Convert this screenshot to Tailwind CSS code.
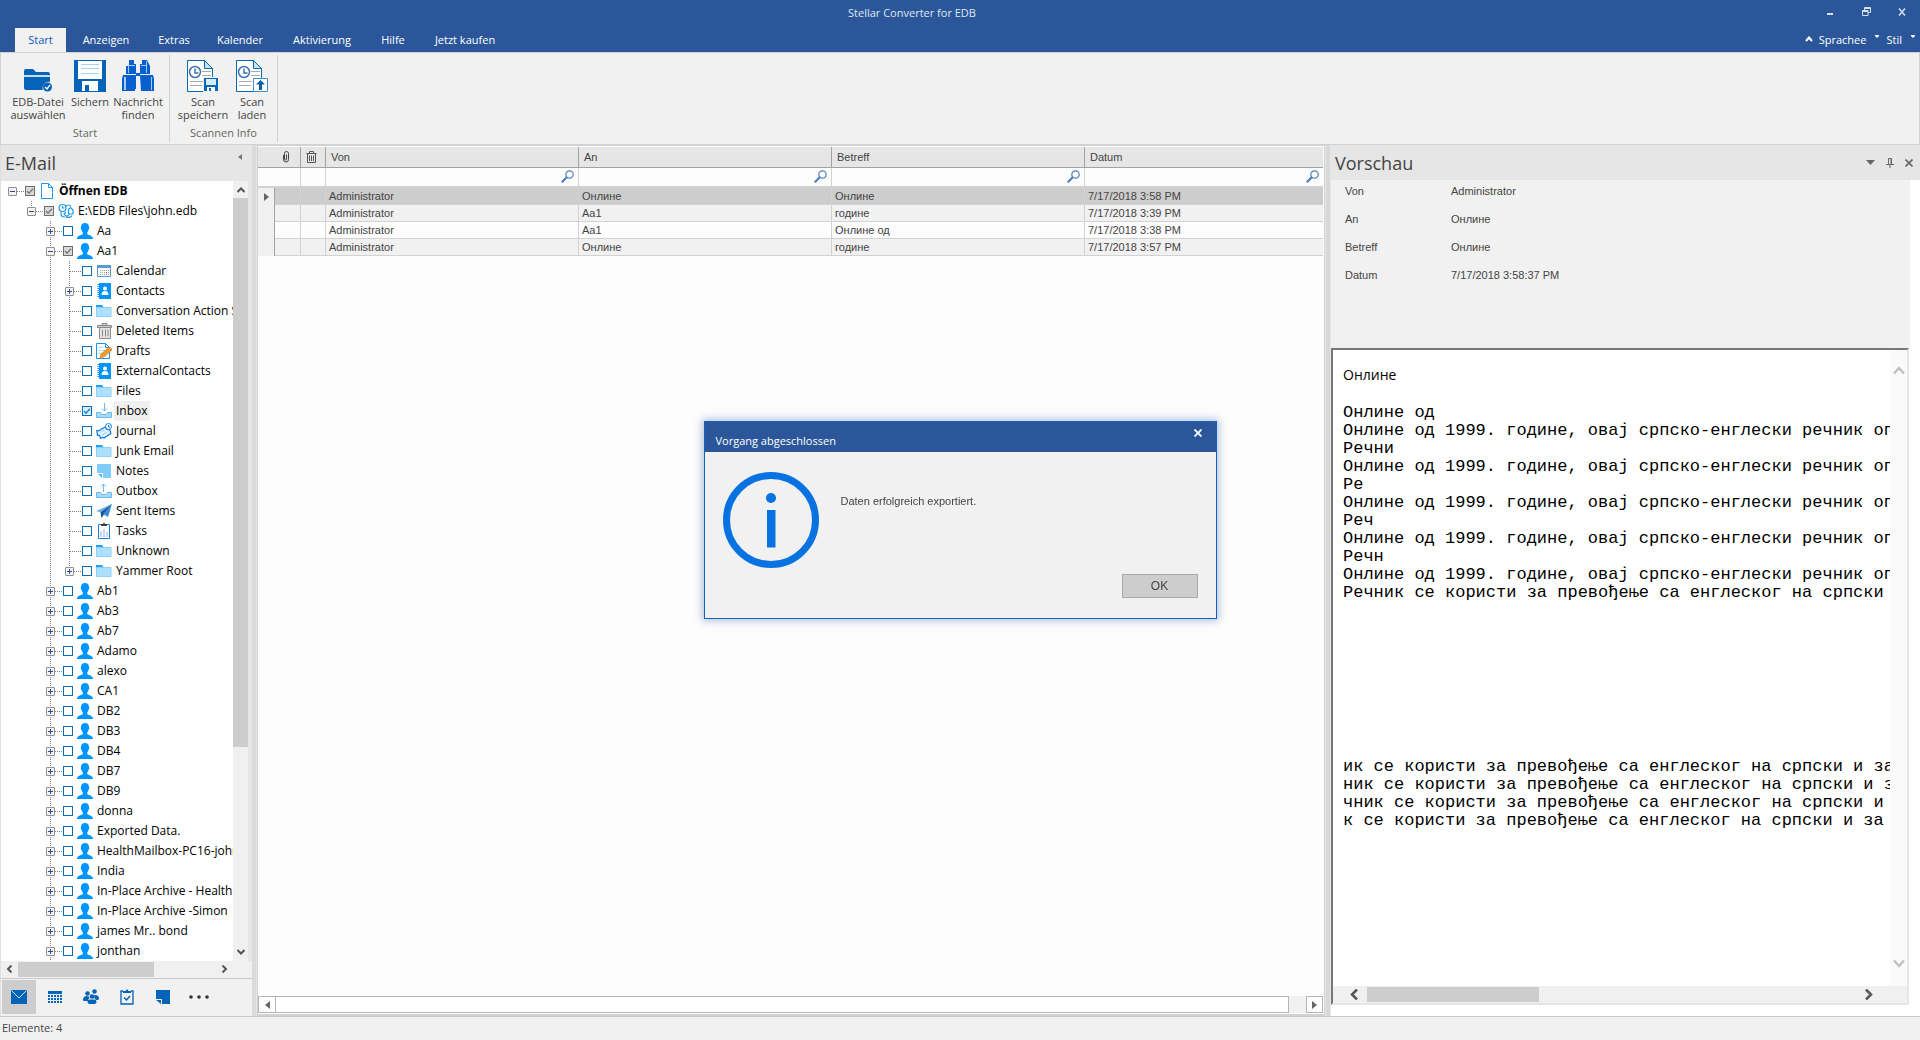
<!DOCTYPE html>
<html lang="de">
<head>
    <meta charset="UTF-8">
    <title>Stellar Converter for EDB</title>
    <meta name="viewport" content="width=device-width, initial-scale=1.0">
    <script src="https://cdn.jsdelivr.net/npm/@tailwindcss/browser@4"></script>
</head>
<body class="h-screen flex flex-col overflow-hidden bg-[#f1f1f1] font-['Open_Sans',sans-serif] text-[11px] leading-[13px] text-[#444]">

    <!-- icon sprite -->
    <svg class="hidden">
        <symbol id="i-user" viewBox="0 0 16 16"><path fill="#0094ff" d="M8 0c2.400 0 4 1.500 4 3.800 0 .6.300.8.300 1.400 0 .7-.5.900-.7 1.500C11.300 8 10.600 9 10.200 9.500v1.700c1.800 1 5.800 1.200 5.800 4.800H0c0-3.600 4-3.800 5.800-4.800V9.500C5.400 9 4.700 8 4.400 6.700c-.2-.6-.7-.8-.7-1.500 0-.6.3-.8.3-1.400C4 1.500 5.600 0 8 0z"/></symbol>
        <symbol id="i-file" viewBox="0 0 16 16"><path fill="#fff" stroke="#1c97ea" d="M2.500.5h7l4 4v11h-11z"/><path fill="none" stroke="#1c97ea" d="M9.500.5v4h4"/></symbol>
        <symbol id="i-db" viewBox="0 0 16 16"><g fill="none" stroke="#1c97ea" stroke-width="1.200"><circle cx="4.500" cy="5" r="3.500"/><path d="M4.500 3v2h2M8 3.500C9 1.500 12 1.500 13 3.500M10 7l2.500-2.500L15 7v4h-4.500M10.500 11V7M3 9v2c0 2 2 3 4 3M8 9l-2 2 2 2h2l1-2M14 12.500c-1 2-4 2.500-6 1.500"/></g></symbol>
        <symbol id="i-calendar" viewBox="0 0 16 16"><path fill="#fff" stroke="#5b9bd5" d="M1.500 2.500h13v11h-13z"/><path fill="#5b9bd5" d="M1 2h14v3H1z"/><path stroke="#9aa" stroke-dasharray="1 1" d="M4 7.500h9M4 9.500h9M4 11.500h9"/><path fill="#e33" d="M10 9h1v1h-1z"/></symbol>
        <symbol id="i-contacts" viewBox="0 0 16 16"><path fill="#0094ff" d="M3 0h12v16H3z"/><path stroke="#0094ff" stroke-width="2" stroke-dasharray="1 1" d="M2.500 1v14"/><circle cx="9" cy="5.500" r="2" fill="#fff"/><path fill="#fff" d="M5.500 12c0-2.500 1-4 3.500-4s3.500 1.500 3.500 4z"/></symbol>
        <symbol id="i-folder" viewBox="0 0 16 16"><path fill="#1ba1f5" d="M0 2h6l1.500 2H15v2H0z"/><path fill="#addfff" stroke="#8fd0fb" d="M.5 4.500h14.500v9H.5z"/></symbol>
        <symbol id="i-bin" viewBox="0 0 16 16"><g fill="none" stroke="#8a8a8a"><path fill="#e6e6e6" d="M3.500 4.500h11v11h-11z"/><path fill="#ccc" d="M1.500 2.500h14v2h-14zM6 2V.5h5V2"/><path d="M6.500 6.500v7M9.500 6.500v7M12 6.500v7"/></g></symbol>
        <symbol id="i-drafts" viewBox="0 0 16 16"><path fill="#fff" stroke="#1c97ea" d="M.5.5h9l4 4v11H.5z"/><path fill="none" stroke="#1c97ea" d="M9.500.5v4h4"/><path stroke="#addfff" d="M2.500 4.500h5M2.500 7.500h8M2.500 10.500h4"/><path fill="#f29a2e" stroke="#d97b12" stroke-width=".6" d="M4 15l1-4 8-7 3 3-8 7z"/><path fill="#e8a0a0" d="M13 4l1-.8 2.500 2.500L16 7z"/></symbol>
        <symbol id="i-inbox" viewBox="0 0 16 16"><path fill="#a6d9fa" stroke="#6bb9ee" d="M.5 9.500h4l1.500 2h4l1.500-2h4v5H.5z"/><path fill="none" stroke="#6bb9ee" d="M8.500 0v8M6 5.500l2.500 2.500L11 5.500"/></symbol>
        <symbol id="i-outbox" viewBox="0 0 16 16"><path fill="#a6d9fa" stroke="#6bb9ee" d="M.5 9.500h4l1.500 2h4l1.500-2h4v5H.5z"/><path fill="none" stroke="#6bb9ee" d="M7.500 9V1M5 3.500L7.500 1l2.500 2.500"/></symbol>
        <symbol id="i-journal" viewBox="0 0 16 16"><path fill="#e6f4ff" stroke="#0f7ae0" stroke-width="1.200" d="M.8 7.500l2 .3L9 4l2 2.500 3 .5.8 3.500L8 15l-1.500-.5-2 .8-1-3-2 0z"/><path stroke="#8fd0fb" d="M4.500 9.500l4-2.500M6 12l5-3"/><circle cx="12.500" cy="3.500" r="3" fill="#fff" stroke="#0f7ae0"/><path fill="none" stroke="#0f7ae0" d="M12.500 2v2H14"/></symbol>
        <symbol id="i-notes" viewBox="0 0 16 16"><path fill="#7fcdfd" d="M1 1h14v14H7V10H1z"/><path fill="#5ab6f0" d="M2 11h4v4z"/></symbol>
        <symbol id="i-sent" viewBox="0 0 16 16"><path fill="#6aaee6" d="M0 8l16-7-9 9z"/><path fill="#14539a" d="M16 1L4.500 9.500 5.500 15 8 11.500z"/><path fill="#3d8bd4" d="M16 1l-4 13-5-3z"/></symbol>
        <symbol id="i-tasks" viewBox="0 0 16 16"><path fill="#fff" stroke="#1482e0" d="M2.500 1.500h11v14h-11z"/><path fill="#444" d="M5 3V1h2V0h2v1h2v2z"/><path fill="#c5d5f3" d="M4 8h2v6H4zM7 6h2v8H7zM10 9h2v5h-2z"/></symbol>
        <symbol id="i-search" viewBox="0 0 13 13"><circle cx="8.500" cy="4.500" r="3.700" fill="#fff" stroke="#4a7ebb" stroke-width="1.200"/><path stroke="#4a7ebb" stroke-width="2.200" d="M5.700 7.300L.8 12.200"/></symbol>
    </svg>

    <header class="bg-[#2b579a] text-white">
        <div class="flex h-7 items-start">
            <h1 class="flex-1 pt-[6px] text-center text-[#dfe7f2]">Stellar Converter for EDB</h1>
            <div class="flex w-24 gap-6 pt-[6px]">
                <button aria-label="Minimieren"><svg class="size-3" viewBox="0 0 12 12"><path fill="#d5dfee" d="M3 7h6v2H3z"/></svg></button>
                <button aria-label="Wiederherstellen"><svg class="size-3" viewBox="0 0 12 12" fill="none" stroke="#d5dfee"><path d="M4.500 4V1.500h6v5H8M4.500 2.500h6M2.500 4.500H8v5H2.500zM2.500 5.500H8"/></svg></button>
                <button aria-label="Schließen"><svg class="size-3" viewBox="0 0 12 12" stroke="#d5dfee" stroke-width="1.500"><path d="M3 2.500l6 7M9 2.500l-6 7"/></svg></button>
            </div>
        </div>
        <nav class="flex h-6 items-stretch pl-[15px] *:pb-[2px]">
            <button class="w-[51px] bg-[#f1f1f1] text-[#0a5bc4]">Start</button>
            <button class="w-20">Anzeigen</button>
            <button class="w-14">Extras</button>
            <button class="w-[76px]">Kalender</button>
            <button class="w-[88px]">Aktivierung</button>
            <button class="w-[54px]">Hilfe</button>
            <button class="w-[90px]">Jetzt kaufen</button>
            <div class="ml-auto flex items-center pr-1">
                <button class="mr-[6px]" aria-label="Menüband ausblenden"><svg class="w-2 h-[6px]" viewBox="0 0 8 6"><path fill="none" stroke="#fff" stroke-width="2" d="M1 5l3-3.500L7 5"/></svg></button>
                <button class="flex items-center gap-2">Sprachee <svg class="mb-1 w-[6px] h-1" viewBox="0 0 6 4"><path fill="#fff" d="M1 0h4v1L3 3 1 1z"/></svg></button>
                <button class="ml-[6px] flex items-center gap-2">Stil <svg class="mb-1 w-[6px] h-1" viewBox="0 0 6 4"><path fill="#fff" d="M1 0h4v1L3 3 1 1z"/></svg></button>
            </div>
        </nav>
    </header>

    <!-- ribbon -->
    <section class="flex h-[93px] shrink-0 border border-[#d2d2d2] bg-[#f1f1f1] py-[2px]">
        <div class="flex w-[169px] flex-col justify-between border-r border-[#d2d2d2] pt-[5px] pb-[3px]">
            <div class="flex gap-[3px] pl-[8px]">
                <button class="flex w-[58px] flex-col items-center gap-[3px]">
                    <svg class="size-8" viewBox="0 0 32 32"><path fill="#0563b8" d="M2 11q0-2 2-2h7l3 3h12q2 0 2 2v1H2z"/><path fill="#0563b8" d="M2 17h26v5a6 6 0 0 0-7 8H4q-2 0-2-2z"/><path fill="#9cc4e6" d="M2 15.500h26v1H2z"/><circle cx="25.500" cy="27" r="4.500" fill="#0563b8"/><path fill="none" stroke="#fff" stroke-width="1.300" d="M23 27l2 2 3-4"/></svg>
                    <span>EDB-Datei<br>auswählen</span>
                </button>
                <button class="flex w-10 flex-col items-center gap-[3px]">
                    <svg class="size-8" viewBox="0 0 32 32"><path fill="#0563b8" d="M0 0h32v32H0z"/><path fill="#fff" d="M4 1h24v18H4zM8 21h16v10H8z"/><path stroke="#a8d4f0" d="M7 4.500h18M7 8.500h18M7 13.500h18"/><path fill="#0563b8" d="M11 25h4v6h-4z"/></svg>
                    <span>Sichern</span>
                </button>
                <button class="flex w-[50px] flex-col items-center gap-[3px]">
                    <svg class="size-8" viewBox="0 0 32 32"><g fill="#0a5fd0"><path d="M7 0h5v4h2v10H4V6h3zM20 0h5l3 6v8H18V4h2zM14 13h4v3h-4z"/><path d="M1 15h13v14H0V19zM18 15h13l1 4v12H19z"/><path d="M0 19h13v12H0z"/></g><path fill="#a5cbf2" d="M6 5h1v8H6zM24 1h1v12h-1zM2 17h2v13H2zM29 17h1v13h-1zM7 5h6v1H7zM19 5h6v1h-6z"/><path fill="#f1f1f1" d="M14 17h4v15h-4zM13 31h6v1h-6zM15 0h2v12h-2z"/></svg>
                    <span>Nachricht<br>finden</span>
                </button>
            </div>
            <span class="text-center text-[#666]">Start</span>
        </div>
        <div class="flex w-[108px] flex-col justify-between border-r border-[#d2d2d2] pt-[5px] pb-[3px]">
            <div class="flex pl-[8px]">
                <button class="flex w-[50px] flex-col items-center gap-[3px]">
                    <svg class="size-8" viewBox="0 0 32 32"><path fill="#fff" stroke="#0a67b5" d="M.5.500h17l8 8v23H.5z"/><path fill="#c4e4fa" stroke="#0a67b5" d="M17.500.5v8h8z"/><circle cx="8" cy="12" r="5.500" fill="#fff" stroke="#3f72af" stroke-width="1.500"/><path fill="none" stroke="#3f72af" stroke-width="1.500" d="M8 8.500V13h3.500"/><path stroke="#a9a9a9" d="M15 11.500h9M15 15.500h9M3 21.500h13M3 25.500h12"/><path fill="#0a67b5" stroke="#f1f1f1" d="M16.500 17.500h15v14h-15z"/><path fill="#d5ecfb" d="M19 19h10v6H19z"/><path fill="#fff" d="M20 27h8v4h-8z"/><path fill="#0a67b5" d="M22 28h2v3h-2z"/></svg>
                    <span>Scan<br>speichern</span>
                </button>
                <button class="flex w-12 flex-col items-center gap-[3px]">
                    <svg class="size-8" viewBox="0 0 32 32"><path fill="#fff" stroke="#0a67b5" d="M.5.500h17l8 8v23H.5z"/><path fill="#c4e4fa" stroke="#0a67b5" d="M17.500.5v8h8z"/><circle cx="8" cy="12" r="5.500" fill="#fff" stroke="#3f72af" stroke-width="1.500"/><path fill="none" stroke="#3f72af" stroke-width="1.500" d="M8 8.500V13h3.500"/><path stroke="#a9a9a9" d="M15 11.500h9M15 15.500h9M3 21.500h13M3 25.500h12"/><path fill="#fff" stroke="#3f8fd0" d="M17.500 18.500h14v13h-14z"/><path fill="#0a5fa8" d="M24.500 20l4.500 4.500h-3V30h-3v-5.500h-3z"/></svg>
                    <span>Scan<br>laden</span>
                </button>
            </div>
            <span class="text-center text-[#666]">Scannen Info</span>
        </div>
    </section>

    <main class="flex min-h-0 flex-1">

        <!-- folder pane -->
        <aside class="flex w-[252px] shrink-0 flex-col border-l border-[#e0e0e0] bg-[#e6e6e6]">
            <div class="flex h-9 shrink-0 items-center pl-1">
                <h2 class="flex-1 text-[18px] leading-6">E-Mail</h2>
                <button class="mr-[10px] mb-3" aria-label="Einklappen"><svg class="h-[6px] w-1" viewBox="0 0 4 6"><path fill="#777" d="M4 0v6L0 3z"/></svg></button>
            </div>
            <div class="flex min-h-0 flex-1 bg-[#e6e6e6]">
                <ul id="tree" class="min-w-0 flex-1 overflow-hidden bg-white text-[12px] leading-5 text-black"></ul>
                <div class="mr-1 flex w-[15px] shrink-0 flex-col items-center bg-[#f0f0f0]">
                    <svg class="h-[17px] w-2 shrink-0" viewBox="0 0 8 17"><path fill="none" stroke="#555" stroke-width="2" d="M.5 11L4 7.500 7.500 11"/></svg>
                    <div class="w-full grow-[549] bg-[#cdcdcd]"></div>
                    <div class="grow-[197]"></div>
                    <svg class="h-[17px] w-2 shrink-0" viewBox="0 0 8 17"><path fill="none" stroke="#555" stroke-width="2" d="M.5 6L4 9.500 7.500 6"/></svg>
                </div>
            </div>
            <div class="flex h-[17px] shrink-0 items-center bg-[#f0f0f0] pb-px">
                <svg class="mx-[5px] h-2 w-[7px]" viewBox="0 0 7 8"><path fill="none" stroke="#555" stroke-width="2" d="M5.500.5L2 4l3.500 3.500"/></svg>
                <div class="h-[15px] w-[136px] bg-[#cdcdcd]"></div>
                <svg class="ml-auto mr-6 h-2 w-[7px]" viewBox="0 0 7 8"><path fill="none" stroke="#555" stroke-width="2" d="M1.500.5L5 4 1.500 7.500"/></svg>
            </div>
            <nav class="flex h-[38px] shrink-0 items-start border-t border-[#c8c8c8] bg-[#f1f1f1] px-px pt-px">
                <button class="flex h-[34px] w-[34px] items-center justify-center bg-[#cdcdcd]" aria-label="E-Mail"><svg class="size-4" viewBox="0 0 16 16"><path fill="#0563b8" d="M0 1h16v14H0z"/><path fill="none" stroke="#cfe0f2" d="M.5 1.500L8 9l7.500-7.500"/></svg></button>
                <button class="flex h-[34px] w-[38px] items-center justify-center" aria-label="Kalender"><svg class="size-4" viewBox="0 0 16 16"><path fill="#0563b8" d="M1 2h14v3H1z"/><path stroke="#0563b8" stroke-width="2" stroke-dasharray="2 1" d="M1 7h14M1 10h14M1 13h14"/></svg></button>
                <button class="flex h-[34px] w-[34px] items-center justify-center" aria-label="Kontakte"><svg class="size-4" viewBox="0 0 16 16"><g fill="#0563b8"><circle cx="11.500" cy="2.500" r="2.300"/><circle cx="4.500" cy="4.500" r="2.300"/><circle cx="9" cy="7.500" r="2.300"/><path d="M0 11q0-4 4-4 2 0 2.500 2Q5 10 5 12H1q-1 0-1-1zM12 6q4 0 4 3.500 0 1.500-3 1.500-1-1.500-2-2 1-1.500 0-3z"/><rect x="4.500" y="10.500" width="9" height="4.500" rx="2.200"/></g></svg></button>
                <button class="flex h-[34px] w-[37px] items-center justify-center" aria-label="Aufgaben"><svg class="size-4" viewBox="0 0 16 16"><path fill="none" stroke="#0563b8" stroke-width="1.300" d="M4 2H2v13h12V2h-2"/><path fill="#0563b8" d="M4 4V2h2.500L8 0l1.500 2H12v2z"/><path fill="none" stroke="#0563b8" stroke-width="1.500" d="M5 8.500l2.500 2.500L11 7"/></svg></button>
                <button class="flex h-[34px] w-9 items-center justify-center" aria-label="Notizen"><svg class="size-4" viewBox="0 0 16 16"><path fill="#0563b8" d="M1 1h14v14H7v-5H1zM1 11h5v4z"/></svg></button>
                <button class="flex h-[34px] w-9 items-center justify-center" aria-label="Mehr"><svg class="h-1 w-5" viewBox="0 0 20 4"><g fill="#333"><circle cx="2" cy="2" r="1.800"/><circle cx="10" cy="2" r="1.800"/><circle cx="18" cy="2" r="1.800"/></g></svg></button>
            </nav>
        </aside>
        <div class="w-[5px] shrink-0 border-r border-[#e6e6e6] bg-[#dadada]"></div>

        <!-- message list -->
        <section class="flex min-w-0 flex-1 flex-col border border-b-2 border-[#d2d2d2] bg-[#fdfdfd] pt-px pr-px font-['Liberation_Sans',sans-serif]">
            <table class="w-full table-fixed border-separate border-spacing-0 text-left">
                <colgroup><col class="w-[17px]"><col class="w-[26px]"><col class="w-[25px]"><col class="w-[253px]"><col class="w-[253px]"><col class="w-[253px]"><col></colgroup>
                <thead>
                    <tr class="h-[21px] bg-[#e6e6e6] *:border-b *:border-[#a3a3a3] *:p-0 *:font-normal">
                        <th></th>
                        <th class="border-r"><div class="pr-[3px]"><svg class="mx-auto h-3 w-2" viewBox="0 0 8 12"><path fill="none" stroke="#444" d="M1.500 4v4.500a2.500 2.500 0 0 0 5 0V2.500a2 2 0 0 0-4 0V8a1 1 0 0 0 2 0V3.500"/></svg></div></th>
                        <th class="border-r"><div class="pr-[3px]"><svg class="mx-auto h-3 w-[11px]" viewBox="0 0 11 12"><path fill="none" stroke="#555" d="M.5 2.500h10M3.500 2V.5h4V2M1.500 3v8.500h8V3M3.500 4.500V10M5.500 4.500V10M7.500 4.500V10"/></svg></div></th>
                        <th class="border-r"><span class="pl-[5px]">Von</span></th>
                        <th class="border-r"><span class="pl-[5px]">An</span></th>
                        <th class="border-r"><span class="pl-[5px]">Betreff</span></th>
                        <th><span class="pl-[5px]">Datum</span></th>
                    </tr>
                    <tr class="h-5 *:border-b-2 *:border-[#d2d2d2] *:p-0">
                        <td></td>
                        <td class="border-r"></td>
                        <td class="border-r"></td>
                        <td class="border-r"><div class="flex items-start pr-1"><input type="text" aria-label="Von filtern" class="h-[17px] min-w-0 flex-1 px-1 outline-none"><svg class="mt-px size-[13px]"><use href="#i-search"/></svg></div></td>
                        <td class="border-r"><div class="flex items-start pr-1"><input type="text" aria-label="An filtern" class="h-[17px] min-w-0 flex-1 px-1 outline-none"><svg class="mt-px size-[13px]"><use href="#i-search"/></svg></div></td>
                        <td class="border-r"><div class="flex items-start pr-1"><input type="text" aria-label="Betreff filtern" class="h-[17px] min-w-0 flex-1 px-1 outline-none"><svg class="mt-px size-[13px]"><use href="#i-search"/></svg></div></td>
                        <td><div class="flex items-start pr-1"><input type="text" aria-label="Datum filtern" class="h-[17px] min-w-0 flex-1 px-1 outline-none"><svg class="mt-px size-[13px]"><use href="#i-search"/></svg></div></td>
                    </tr>
                </thead>
                <tbody id="messages"></tbody>
            </table>
            <div class="mt-auto mb-px flex h-[17px]">
                <button class="flex w-[18px] items-center justify-center border border-[#b5b5b5] bg-[#fdfdfd]" aria-label="Nach links"><svg class="h-2 w-[5px]" viewBox="0 0 5 8"><path fill="#666" d="M5 0v8L0 4z"/></svg></button>
                <div class="-ml-px flex-1 border border-[#b5b5b5] bg-white"></div>
                <div class="w-[17px] bg-[#f1f1f1]"></div>
                <button class="flex w-[17px] items-center justify-center border border-[#b5b5b5] bg-[#fdfdfd]" aria-label="Nach rechts"><svg class="h-2 w-[5px]" viewBox="0 0 5 8"><path fill="#666" d="M0 0v8l5-4z"/></svg></button>
            </div>
        </section>
        <div class="w-[6px] shrink-0 border-x border-[#e6e6e6] bg-[#d8d8d8]"></div>

        <!-- preview -->
        <aside class="flex w-[589px] shrink-0 flex-col bg-white">
            <div class="flex h-[35px] shrink-0 items-center bg-[#e6e6e6] pl-1 pr-[7px]">
                <h2 class="flex-1 text-[18px] leading-6">Vorschau</h2>
                <div class="flex items-center gap-[11px]">
                    <button aria-label="Menü"><svg class="h-[5px] w-[9px]" viewBox="0 0 9 5"><path fill="#666" d="M0 0h9L4.500 5z"/></svg></button>
                    <button aria-label="Anheften"><svg class="h-[10px] w-2" viewBox="0 0 8 10"><path fill="none" stroke="#666" d="M2.500 6V.5h3V6M0 6.500h8M4 7v3M5 1v5"/></svg></button>
                    <button aria-label="Schließen"><svg class="size-2" viewBox="0 0 8 8"><path stroke="#666" stroke-width="1.600" d="M.5.5l7 7M7.500.5l-7 7"/></svg></button>
                </div>
            </div>
            <dl class="mr-[10px] grid h-[168px] shrink-0 grid-cols-[106px_1fr] content-start gap-y-[15px] bg-[#f1f1f1] pt-[5px] pl-[14px] font-['Liberation_Sans',sans-serif]">
                <dt>Von</dt><dd>Administrator</dd>
                <dt>An</dt><dd>Онлине</dd>
                <dt>Betreff</dt><dd>Онлине</dd>
                <dt>Datum</dt><dd>7/17/2018 3:58:37 PM</dd>
            </dl>
            <div class="mr-[11px] mb-[11px] flex min-h-0 flex-1 flex-col border-2 border-t-[#777] border-r-[#e6e6e6] border-b-[#e6e6e6] border-l-[#777]">
                <div class="flex min-h-0 flex-1">
                    <div class="min-w-0 flex-1 overflow-hidden pt-4 pl-[10px] text-black">
                        <p class="text-[14px] leading-[18px]">Онлине</p>
                        <pre id="body-top" class="mt-5 font-['Liberation_Mono',monospace] text-[17px] leading-[18px]"></pre>
                        <pre id="body-bottom" class="mt-[156px] font-['Liberation_Mono',monospace] text-[17px] leading-[18px]"></pre>
                    </div>
                    <div class="flex w-[17px] flex-col items-center justify-between bg-[#fafafa] pt-4 pb-[18px]">
                        <svg class="h-[9px] w-3" viewBox="0 0 12 9"><path fill="none" stroke="#c0c0c0" stroke-width="2.500" d="M1 7.500L6 2l5 5.500"/></svg>
                        <svg class="h-[9px] w-3" viewBox="0 0 12 9"><path fill="none" stroke="#c0c0c0" stroke-width="2.500" d="M1 1.500L6 7l5-5.500"/></svg>
                    </div>
                </div>
                <div class="flex h-[17px] shrink-0 items-center bg-[#f0f0f0]">
                    <svg class="ml-[17px] h-[11px] w-2" viewBox="0 0 8 11"><path fill="none" stroke="#555" stroke-width="2.500" d="M7 .5L2 5.500l5 5"/></svg>
                    <div class="ml-[9px] h-[15px] w-[172px] bg-[#cdcdcd]"></div>
                    <svg class="ml-auto mr-[34px] h-[11px] w-2" viewBox="0 0 8 11"><path fill="none" stroke="#555" stroke-width="2.500" d="M1 .5l5 5-5 5"/></svg>
                </div>
            </div>
        </aside>
    </main>

    <footer class="h-6 shrink-0 border-t border-[#c8c8c8] px-[2px] pt-1">Elemente: 4</footer>

    <!-- dialog -->
    <div class="fixed inset-0 flex items-center justify-center">
        <div role="dialog" aria-labelledby="dlg-title" class="flex h-[198px] w-[513px] flex-col border border-[#0f62c4] bg-[#f1f1f1] shadow-[0_0_8px_2px_rgba(43,87,154,0.35)]">
            <div class="flex h-[30px] items-start bg-[#2b579a] pl-[11px] pr-[14px] text-white">
                <h3 id="dlg-title" class="flex-1 pt-3">Vorgang abgeschlossen</h3>
                <button class="pt-[7px]" aria-label="Schließen"><svg class="size-2" viewBox="0 0 8 8"><path stroke="#fff" stroke-width="1.800" d="M.5.5l7 7M7.500.5l-7 7"/></svg></button>
            </div>
            <div class="flex flex-1 items-start pt-5 pl-[18px] font-['Liberation_Sans',sans-serif]">
                <svg class="size-24" viewBox="0 0 96 96"><circle cx="48" cy="48" r="44.500" fill="none" stroke="#0873e0" stroke-width="7"/><circle cx="48" cy="26" r="5" fill="#0873e0"/><path fill="#0873e0" d="M44 38h8.500v37.500H44z"/></svg>
                <p class="flex-1 pt-[23px] pl-[22px]">Daten erfolgreich exportiert.</p>
                <button class="mt-[102px] mr-[18px] h-6 w-[76px] border border-[#a9a9a9] bg-[#cdcdcd] text-[12px]">OK</button>
            </div>
        </div>
    </div>

    <script>
        // [level, name, icon, expander, checkbox state]
        const nodes = [
            [0, 'Öffnen EDB', 'file', '-', 'gray'],
            [1, 'E:\\EDB Files\\john.edb', 'db', '-', 'gray'],
            [2, 'Aa', 'user', '+'],
            [2, 'Aa1', 'user', '-', 'gray'],
            [3, 'Calendar', 'calendar'],
            [3, 'Contacts', 'contacts', '+'],
            [3, 'Conversation Action Settings', 'folder'],
            [3, 'Deleted Items', 'bin'],
            [3, 'Drafts', 'drafts'],
            [3, 'ExternalContacts', 'contacts'],
            [3, 'Files', 'folder'],
            [3, 'Inbox', 'inbox', '', 'blue'],
            [3, 'Journal', 'journal'],
            [3, 'Junk Email', 'folder'],
            [3, 'Notes', 'notes'],
            [3, 'Outbox', 'outbox'],
            [3, 'Sent Items', 'sent'],
            [3, 'Tasks', 'tasks'],
            [3, 'Unknown', 'folder'],
            [3, 'Yammer Root', 'folder', '+'],
            ...['Ab1', 'Ab3', 'Ab7', 'Adamo', 'alexo', 'CA1', 'DB2', 'DB3', 'DB4', 'DB7', 'DB9', 'donna',
                'Exported Data.', 'HealthMailbox-PC16-john', 'India', 'In-Place Archive - HealthMailbox',
                'In-Place Archive -Simon', 'james Mr.. bond', 'jonthan'].map(n => [2, n, 'user', '+'])
        ];
        // dotted tree lines, one pixel on and one off
        const dotsY = 'w-px bg-[repeating-linear-gradient(to_bottom,#808080_0_1px,transparent_1px_2px)]';
        const dotsX = 'h-px bg-[repeating-linear-gradient(to_right,#808080_0_1px,transparent_1px_2px)]';
        const blank = '<span class="w-[19px] shrink-0"></span>';
        const guide = `<span class="flex w-[19px] shrink-0 justify-center self-stretch"><span class="${dotsY}"></span></span>`;
        const checkStyles = {
            none: 'border-[#0e6cb5] bg-white',
            gray: 'border-[#6d6d6d] bg-[#d9d9d9]',
            blue: 'border-[#0e6cb5] bg-[#d9f0fc]'
        };

        document.getElementById('tree').innerHTML = nodes.map(([level, name, icon, exp, state], i) => {
            const indent = level === 3 ? blank + blank + guide : blank.repeat(level);
            const box = exp ? `<button aria-label="${exp === '+' ? 'Aufklappen' : 'Zuklappen'}" class="relative size-[9px] rounded-[1px] border border-[#8f8f8f] bg-[#f4f4f4]">
                <svg class="block size-[7px]" viewBox="0 0 7 7"><path stroke="#2c4a9a" d="M1 3.500h5${exp === '+' ? 'M3.500 1v5' : ''}"/></svg></button>` : '';
            const lineEnd = level === 0 ? 'hidden' : level === 1 || name === 'Yammer Root' ? 'h-[10px]' : 'h-5';
            const tick = state ? `<svg class="pointer-events-none absolute left-0 top-0 size-[10px]" viewBox="0 0 10 10"><path fill="none" stroke="${state === 'gray' ? '#777' : '#1482c8'}" stroke-width="1.300" d="M2 5l2 2.300L8 2.700"/></svg>` : '';
            return `<li class="flex h-5 items-center pl-[2px]">${indent}
                <span class="relative flex w-[19px] shrink-0 items-center justify-center self-stretch"><span class="absolute left-[9px] top-0 ${dotsY} ${lineEnd}"></span>
                    <span class="absolute left-[10px] -right-[3px] top-[10px] ${dotsX}"></span>${box}</span>
                <span class="relative ml-[3px] size-[10px] shrink-0"><input id="n${i}" type="checkbox" ${state ? 'checked' : ''} class="block size-[10px] appearance-none border ${checkStyles[state || 'none']}">${tick}</span>
                <svg class="ml-1 size-4 shrink-0"><use href="#i-${icon}"/></svg>
                <label for="n${i}" class="ml-[2px] whitespace-nowrap px-[2px] ${level === 0 ? 'font-bold' : ''} ${name === 'Inbox' ? 'bg-[#f0f0f0]' : ''}">${name}</label></li>`;
        }).join('');

        const messages = [
            ['Administrator', 'Онлине', 'Онлине', '7/17/2018 3:58 PM'],
            ['Administrator', 'Aa1', 'године', '7/17/2018 3:39 PM'],
            ['Administrator', 'Aa1', 'Онлине од', '7/17/2018 3:38 PM'],
            ['Administrator', 'Онлине', 'године', '7/17/2018 3:57 PM']
        ];
        const rowStyles = ['bg-[#cdcdcd]', 'bg-[#f1f1f1]', 'bg-[#fdfdfd]', 'bg-[#f1f1f1]'];
        document.getElementById('messages').innerHTML = messages.map((m, i) =>
            `<tr class="h-[17px] *:p-0 ${rowStyles[i]}">
                <td class="border-r border-[#a3a3a3] bg-[#f1f1f1]">${i ? '' : '<svg class="mx-auto h-2 w-[5px]" viewBox="0 0 5 8"><path fill="#666" d="M0 0v8l5-4z"/></svg>'}</td>
                <td class="border-r border-b border-[#d2d2d2]"></td><td class="border-r border-b border-[#d2d2d2]"></td>
                ${m.map((t, j) => `<td class="border-b border-[#d2d2d2] ${j < 3 ? 'border-r' : ''}"><span class="pl-[3px]">${t}</span></td>`).join('')}</tr>`).join('');

        const long = 'Онлине од 1999. године, овај српско-енглески речник описује';
        const use = 'се користи за превођење са енглеског на српски и за превођење';
        document.getElementById('body-top').textContent =
            ['Онлине од', long, 'Речни', long, 'Ре', long, 'Реч', long, 'Речн', long, 'Речник ' + use].join('\n');
        document.getElementById('body-bottom').textContent =
            ['ик', 'ник', 'чник', 'к'].map(p => p + ' ' + use).join('\n');
    </script>
</body>
</html>
